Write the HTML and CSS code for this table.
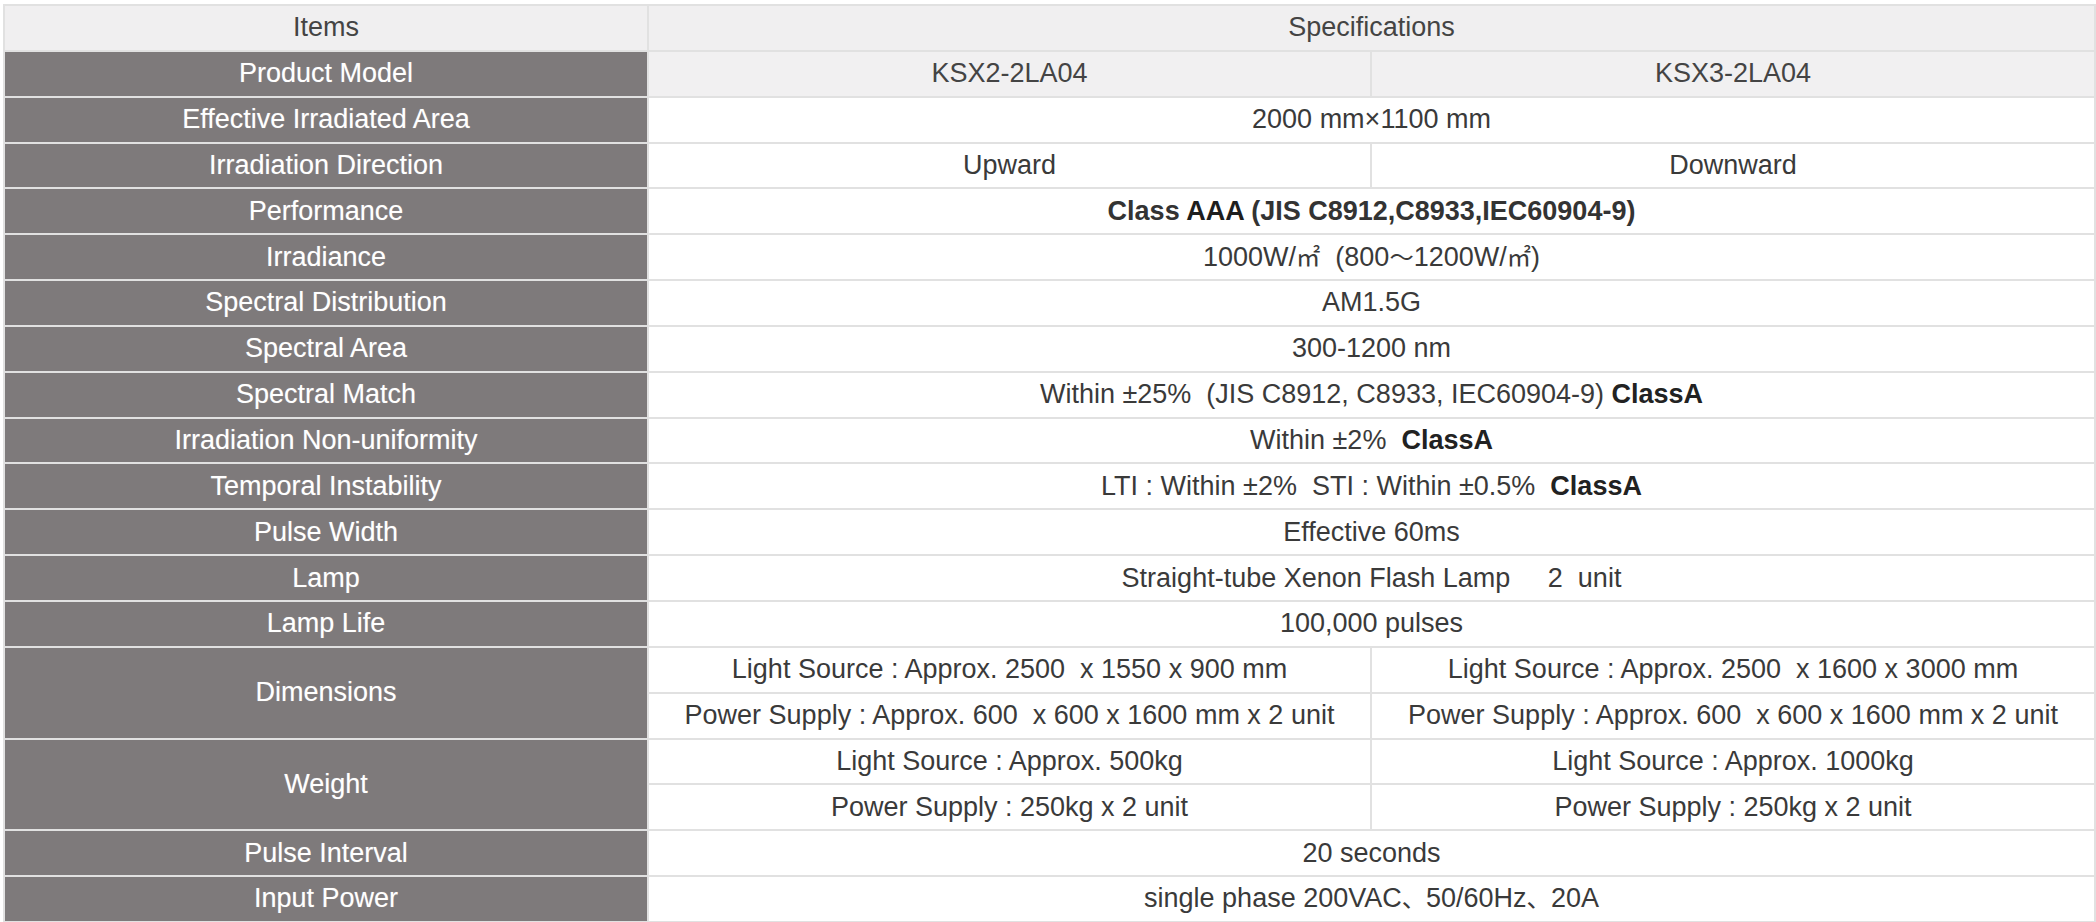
FILE: index.html
```html
<!DOCTYPE html>
<html lang="en">
<head>
<meta charset="utf-8">
<title>Specifications</title>
<link rel="stylesheet" href="styles.css">
</head>
<body>
<table class="spec">
  <colgroup>
    <col class="c-item">
    <col class="c-a">
    <col class="c-b">
  </colgroup>
  <tbody>
    <tr class="head">
      <td class="th-item">Items</td>
      <td colspan="2">Specifications</td>
    </tr>
    <tr class="model">
      <th>Product Model</th>
      <td>KSX2-2LA04</td>
      <td>KSX3-2LA04</td>
    </tr>
    <tr>
      <th>Effective Irradiated Area</th>
      <td colspan="2">2000 mm×1100 mm</td>
    </tr>
    <tr>
      <th>Irradiation Direction</th>
      <td>Upward</td>
      <td>Downward</td>
    </tr>
    <tr>
      <th>Performance</th>
      <td colspan="2" class="b">Class <span class="dk">AAA</span> (JIS C8912,C8933,IEC60904-9)</td>
    </tr>
    <tr>
      <th>Irradiance</th>
      <td colspan="2">1000W/<span class="cjk">㎡</span>&nbsp; (800<span class="cjk">～</span>1200W/<span class="cjk">㎡</span>)</td>
    </tr>
    <tr>
      <th>Spectral Distribution</th>
      <td colspan="2">AM1.5G</td>
    </tr>
    <tr>
      <th>Spectral Area</th>
      <td colspan="2">300-1200 nm</td>
    </tr>
    <tr>
      <th>Spectral Match</th>
      <td colspan="2">Within ±25%&nbsp; (JIS C8912, C8933, IEC60904-9) <b>ClassA</b></td>
    </tr>
    <tr>
      <th>Irradiation Non-uniformity</th>
      <td colspan="2">Within ±2%&nbsp; <b>ClassA</b></td>
    </tr>
    <tr>
      <th>Temporal Instability</th>
      <td colspan="2">LTI : Within ±2%&nbsp; STI : Within ±0.5%&nbsp; <b>ClassA</b></td>
    </tr>
    <tr>
      <th>Pulse Width</th>
      <td colspan="2">Effective 60ms</td>
    </tr>
    <tr>
      <th>Lamp</th>
      <td colspan="2">Straight-tube Xenon Flash Lamp&nbsp;&nbsp;&nbsp;&nbsp; 2&nbsp; unit</td>
    </tr>
    <tr>
      <th>Lamp Life</th>
      <td colspan="2">100,000 pulses</td>
    </tr>
    <tr>
      <th rowspan="2">Dimensions</th>
      <td>Light Source : Approx. 2500&nbsp; x 1550 x 900 mm</td>
      <td>Light Source : Approx. 2500&nbsp; x 1600 x 3000 mm</td>
    </tr>
    <tr>
      <td>Power Supply : Approx. 600&nbsp; x 600 x 1600 mm x 2 unit</td>
      <td>Power Supply : Approx. 600&nbsp; x 600 x 1600 mm x 2 unit</td>
    </tr>
    <tr>
      <th rowspan="2">Weight</th>
      <td>Light Source : Approx. 500kg</td>
      <td>Light Source : Approx. 1000kg</td>
    </tr>
    <tr>
      <td>Power Supply : 250kg x 2 unit</td>
      <td>Power Supply : 250kg x 2 unit</td>
    </tr>
    <tr>
      <th>Pulse Interval</th>
      <td colspan="2">20 seconds</td>
    </tr>
    <tr>
      <th>Input Power</th>
      <td colspan="2">single phase 200VAC<span class="cjk">、</span>50/60Hz<span class="cjk">、</span>20A</td>
    </tr>
  </tbody>
</table>
</body>
</html>
```

FILE: styles.css
```css
html, body {
  margin: 0;
  padding: 0;
  background: #ffffff;
}

body {
  padding: 4px 2px 0 3px;
  font-family: "Liberation Sans", Arial, "Noto Sans CJK JP", sans-serif;
}

.spec {
  width: 2091px;
  border-collapse: collapse;
  table-layout: fixed;
  font-size: 27px;
  color: #3a3a3a;
}

.c-item { width: 644px; }
.c-a { width: 723px; }
.c-b { width: 724px; }

.spec tr {
  height: 45.85px;
}

.spec th,
.spec td {
  padding: 0;
  text-align: center;
  vertical-align: middle;
  border: 2px solid #e1e1e1;
  white-space: nowrap;
  line-height: 1;
}

.spec th {
  background: #7e7a7b;
  color: #ffffff;
  font-weight: normal;
  text-shadow: 0 0 1px rgba(255, 255, 255, 0.35);
}

.spec .head td {
  background: #f0eff0;
  color: #444444;
}

.spec .model td {
  background: #f1f0f1;
  color: #444444;
}

.spec .b {
  font-weight: bold;
  color: #333333;
}

.spec .dk {
  color: #1e1e1e;
}

.spec b {
  color: #222222;
}

.cjk {
  font-family: "Noto Sans CJK JP", sans-serif;
  font-size: 0.9em;
}
```
